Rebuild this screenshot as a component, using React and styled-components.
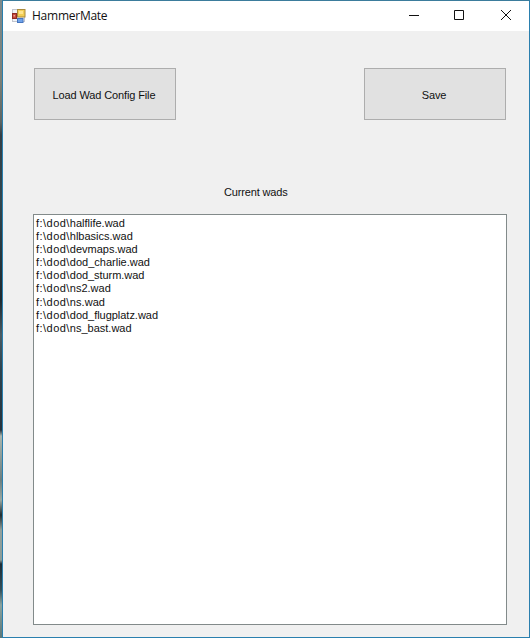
import React from 'react';
import styled, { createGlobalStyle } from 'styled-components';

const GlobalStyle = createGlobalStyle`
  * { box-sizing: border-box; }
  body { margin: 0; overflow: hidden; }
`;

const Desktop = styled.div`
  width: 530px;
  height: 638px;
  padding-left: 2px;
  background: linear-gradient(#7d8a8c 0, #7c8077 80px, #5d6563 122px, #343f46 135px, #30464f 200px,
    #1d2930 300px, #4a5b63 335px, #2c434f 370px, #26333d 430px, #aab5ad 436px, #6c7f80 480px,
    #9aa8a2 500px, #1f2c30 515px, #92a09c 530px, #8b9c98 560px, #1d2c36 564px, #33505a 590px, #8ba39f 605px, #5c7677 638px);
`;

const Window = styled.main`
  height: 100%;
  display: flex;
  flex-direction: column;
  border: 1px solid #2a7fae;
  border-top-color: #3b7c9c;
  background: #f0f0f0;
  color: #111;
  font-family: "Liberation Sans", Arial, sans-serif;
  font-size: 11px;
`;

const TitleBar = styled.header`
  height: 30px;
  display: flex;
  align-items: center;
  padding-left: 9px;
  background: #fff;
`;

const Title = styled.h1`
  flex: 1;
  margin: 0 0 0 6px;
  font: 400 12px/16px "Open Sans", "Noto Sans", sans-serif;
  letter-spacing: -0.25px;
`;

const Captions = styled.div`
  display: flex;
`;

const Caption = styled.button`
  width: 46px;
  height: 30px;
  padding: 0 0 2px;
  border: 0;
  background: transparent;
  display: grid;
  place-items: center;
  svg { display: block; }
`;

const Client = styled.section`
  flex: 1;
  display: flex;
  flex-direction: column;
  padding: 37px 22px 12px 30px;
`;

const Actions = styled.div`
  display: flex;
  justify-content: space-between;
  padding: 0 1px;
`;

const Button = styled.button`
  width: 142px;
  height: 52px;
  padding: 1px 2px 0 0;
  border: 1px solid #adadad;
  background: #e1e1e1;
  color: #111;
  font: inherit;
  letter-spacing: -0.13px;
`;

const Label = styled.h2`
  margin: 65px 0 16px 191px;
  height: 13px;
  font: inherit;
  line-height: 14px;
  letter-spacing: -0.15px;
`;

const List = styled.ul`
  height: 411px;
  margin: 0;
  padding: 2px;
  list-style: none;
  border: 1px solid #828a8a;
  background: #fff;
`;

const Item = styled.li`
  height: 13.1px;
  line-height: 13px;
  white-space: pre;
  letter-spacing: ${({ $spacing = 0 }) => $spacing}px;
`;

const Folder = styled.span`
  letter-spacing: 0.46px;
`;

const wads = [
  { name: 'halflife' },
  { name: 'hlbasics' },
  { name: 'devmaps' },
  { name: 'dod_charlie' },
  { name: 'dod_sturm', spacing: -0.05 },
  { name: 'ns2' },
  { name: 'ns', spacing: 0.05 },
  { name: 'dod_flugplatz', spacing: -0.03 },
  { name: 'ns_bast' },
];

const FormIcon = () => (
  <svg width="14" height="14" viewBox="0 0 14 14">
    <rect x=".5" y=".5" width="12" height="12" fill="#f1f3f7" stroke="#c2c5ce" />
    <rect x="5.5" y=".5" width="7.5" height="7.5" fill="#f4cf55" stroke="#a98a3c" />
    <rect x="7" y="2" width="4" height="3" fill="#ffe590" />
    <rect x=".5" y="4.5" width="4" height="5" fill="#c4493c" stroke="#8f2a24" />
    <rect x="1.5" y="6" width="1.5" height="1.5" fill="#efa294" />
    <rect x="5.5" y="9.5" width="5.5" height="4" fill="#6fa3ea" stroke="#4675be" />
  </svg>
);

export default function App() {
  return (
    <>
      <GlobalStyle />
      <Desktop>
        <Window>
          <TitleBar>
            <FormIcon />
            <Title>HammerMate</Title>
            <Captions>
              <Caption aria-label="Minimize">
                <svg width="12" height="12"><path d="M1 6.5h10" stroke="#111" /></svg>
              </Caption>
              <Caption aria-label="Maximize">
                <svg width="12" height="12"><path d="M.5 1.5h9v9h-9z" fill="none" stroke="#111" /></svg>
              </Caption>
              <Caption aria-label="Close">
                <svg width="12" height="12"><path d="M1 1l10 10M11 1L1 11" stroke="#111" /></svg>
              </Caption>
            </Captions>
          </TitleBar>
          <Client>
            <Actions>
              <Button>Load Wad Config File</Button>
              <Button>Save</Button>
            </Actions>
            <Label>Current wads</Label>
            <List>
              {wads.map(({ name, spacing }) => (
                <Item key={name} $spacing={spacing}>
                  <Folder>{'f:\\dod\\'}</Folder>
                  {`${name}.wad`}
                </Item>
              ))}
            </List>
          </Client>
        </Window>
      </Desktop>
    </>
  );
}
